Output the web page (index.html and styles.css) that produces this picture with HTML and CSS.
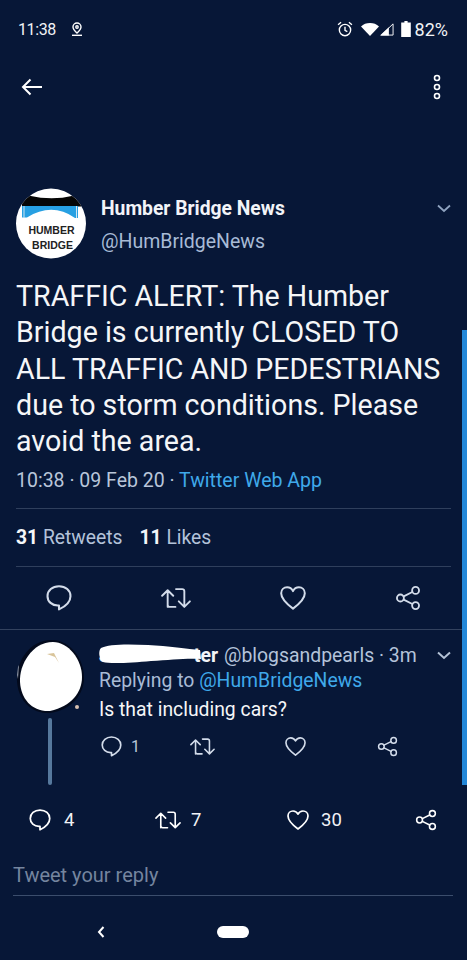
FILE: index.html
```html
<!DOCTYPE html>
<html lang="en">
<head>
    <meta charset="UTF-8">
    <meta name="viewport" content="width=device-width, initial-scale=1.0">
    <title>Humber Bridge News on Twitter</title>
    <link rel="stylesheet" href="styles.css">
</head>
<body>
    <div class="status-bar">
        <div class="status-left">
            <span class="clock">11:38</span>
            <svg class="icon" width="12" height="14" viewBox="0 0 12 14" fill="none" stroke="#fff" stroke-width="1.4"><path d="M6 1a4 4 0 0 0-4 4c0 2.4 2.4 4.400 4 6 1.600-1.600 4-3.600 4-6a4 4 0 0 0-4-4z"/><circle cx="6" cy="5" r="1.200"/><path d="M1 13.300h10"/></svg>
        </div>
        <div class="status-right">
            <svg width="16" height="16" viewBox="0 0 15 15" fill="none" stroke="#fff" stroke-width="1.300"><circle cx="7.500" cy="8.500" r="5.300"/><path d="M7.500 5.500v3.300l2.200 1.200M1 3.500l2.800-2.300M14 3.500l-2.800-2.300"/></svg>
            <svg class="wifi" width="18" height="14" viewBox="0 0 18 14"><path d="M0 4.500C2.400 2 5.500 1 9 1s6.600 1 9 3.500L9 14z" fill="#fff"/></svg>
            <svg class="signal" width="14" height="14" viewBox="0 0 15 14"><path d="M9.500 5v9H0z" fill="#fff"/><path d="M14 1.500V13.500H1.500z" fill="none" stroke="#fff"/></svg>
            <svg class="battery" width="10" height="16" viewBox="0 0 9 15"><path d="M3 0h3v1.500h3V15H0V1.500h3z" fill="#fff"/></svg>
            <span class="percent">82%</span>
        </div>
    </div>

    <div class="toolbar">
        <svg width="22" height="18" viewBox="0 0 22 18" fill="none" stroke="#fff" stroke-width="2"><path d="M21 9H2M9.500 1.500 2 9l7.500 7.500"/></svg>
        <svg width="10" height="26" viewBox="0 0 10 26" fill="none" stroke="#fff" stroke-width="1.600"><circle cx="5" cy="4" r="2.500"/><circle cx="5" cy="13" r="2.500"/><circle cx="5" cy="22" r="2.500"/></svg>
    </div>

    <div class="tweet">
        <div class="tweet-head">
            <svg class="avatar" width="70" height="71" viewBox="0 0 70 71">
                <defs><clipPath id="logoClip"><circle cx="35" cy="35.500" r="35"/></clipPath></defs>
                <g clip-path="url(#logoClip)">
                    <rect width="70" height="71" fill="#fff"/>
                    <path d="M6 13.300 13.500 7.700Q36 13 57 7.700L65 15v3.500H6z" fill="#050505"/>
                    <path d="M6 18H62V30H59Q36 14 11 29.500H6z" fill="#27a0e2"/>
                    <path d="M8 18v12M60.500 18v12" stroke="#cfe6f4" stroke-width="1"/>
                </g>
                <text x="35.500" y="46" class="logo-text" text-anchor="middle">HUMBER</text>
                <text x="36.500" y="61" class="logo-text" text-anchor="middle">BRIDGE</text>
            </svg>
            <div class="tweet-names">
                <div class="name">Humber Bridge News</div>
                <div class="handle">@HumBridgeNews</div>
            </div>
            <svg class="chevron" width="14" height="9" viewBox="0 0 14 9" fill="none" stroke="#8fa3c0" stroke-width="1.800"><path d="M1 1.500 7 7l6-5.500"/></svg>
        </div>
        <p class="tweet-text">TRAFFIC ALERT: The Humber Bridge is currently CLOSED TO ALL TRAFFIC AND PEDESTRIANS due to storm conditions. Please avoid the area.</p>
        <div class="meta">10:38 · 09 Feb 20 · <span class="link">Twitter Web App</span></div>
        <div class="stats">
            <span><b>31</b> Retweets</span>
            <span><b>11</b> Likes</span>
        </div>
        <div class="actions">
            <svg width="26" height="26" viewBox="1.500 2 21 21.500" class="ic"><path d="M12 3C6.500 3 2.500 6.600 2.500 11.200c0 4.500 3.800 7.800 8.500 7.800h1v3.200c4.500-2.200 9.500-6 9.500-11C21.500 6.600 17.500 3 12 3z"/></svg>
            <svg width="30" height="26" viewBox="1 2 27 20" class="ic"><path d="M7 20V5.500M2 10l5-5 5 5M14.500 4H20a2 2 0 0 1 2 2v13.500M17 15l5 5 5-5M14 20H9a2 2 0 0 1-2-2"/></svg>
            <svg width="26" height="26" viewBox="1 2 22 21" class="ic"><path d="M12 21.500C6 17 2 13 2 8.500 2 5.500 4.300 3.500 7 3.500c2.200 0 4 1.200 5 3.200 1-2 2.800-3.200 5-3.200 2.700 0 5 2 5 5 0 4.500-4 8.500-10 13z"/></svg>
            <svg width="26" height="26" viewBox="0 0 24 24" class="ic"><circle cx="5" cy="12" r="3.200"/><circle cx="19" cy="5" r="3.200"/><circle cx="19" cy="19" r="3.200"/><path d="M8 10.500 16 6.500M8 13.500l8 4"/></svg>
        </div>
    </div>

    <div class="reply">
        <div class="reply-side">
            <svg class="reply-avatar" width="70" height="76" viewBox="0 0 70 76">
                <path d="M2 44C1 24 15 2 38 3c17 1 31 18 31 38 0 16-12 32-34 35C15 77 3 62 2 44z" fill="#030a1c"/>
                <path d="M5 45C4 28 17 5 38 5c15 0 29 17 29 35 0 15-10 29-32 34C17 75 6 62 5 45z" fill="#fff"/>
                <path d="M32 17l7-1 5 10-4-6z" fill="#d9c49a"/>
                <path d="M3 30l1-2-1 14-1-4z" fill="#8b93a3"/>
                <circle cx="62" cy="70" r="2" fill="#d8c1b0"/>
            </svg>
            <div class="thread-line"></div>
        </div>
        <div class="reply-body">
            <div class="reply-head">
                <span class="name-small">J<span class="blanked"></span>ter</span>
                <span class="handle-small">@blogsandpearls · 3m</span>
                <svg class="reply-chevron" width="14" height="9" viewBox="0 0 14 9" fill="none" stroke="#b4c2d6" stroke-width="2"><path d="M1 1.500 7 7l6-5.500"/></svg>
                <svg class="redaction" width="104" height="20" viewBox="0 0 104 20"><path d="M3 4C10 0 30 0 50 1s40 4 52 5l1 9c-15-1-30 1-50 2-20 2-42 3-48 1C1 15 0 7 3 4z" fill="#fff"/></svg>
            </div>
            <div class="replying">Replying to <span class="link">@HumBridgeNews</span></div>
            <div class="reply-text">Is that including cars?</div>
            <div class="reply-actions">
                <div class="count-item w-reply">
                    <svg width="21" height="21" viewBox="1.500 2 21 21.500" class="ic"><path d="M12 3C6.500 3 2.500 6.600 2.500 11.200c0 4.500 3.800 7.800 8.500 7.800h1v3.200c4.500-2.200 9.500-6 9.500-11C21.500 6.600 17.500 3 12 3z"/></svg>
                    <span>1</span>
                </div>
                <svg class="w-rt ic" width="25" height="21" viewBox="1 2 27 20"><path d="M7 20V5.500M2 10l5-5 5 5M14.500 4H20a2 2 0 0 1 2 2v13.500M17 15l5 5 5-5M14 20H9a2 2 0 0 1-2-2"/></svg>
                <svg class="w-like ic" width="21" height="21" viewBox="1 2 22 21"><path d="M12 21.500C6 17 2 13 2 8.500 2 5.500 4.300 3.500 7 3.500c2.200 0 4 1.200 5 3.200 1-2 2.800-3.200 5-3.200 2.700 0 5 2 5 5 0 4.500-4 8.500-10 13z"/></svg>
                <svg class="ic" width="21" height="21" viewBox="0 0 24 24"><circle cx="5" cy="12" r="3.200"/><circle cx="19" cy="5" r="3.200"/><circle cx="19" cy="19" r="3.200"/><path d="M8 10.500 16 6.500M8 13.500l8 4"/></svg>
            </div>
        </div>
    </div>

    <div class="count-bar">
        <div class="count-item c-reply">
            <svg width="22" height="22" viewBox="1.500 2 21 21.500" class="ic white"><path d="M12 3C6.500 3 2.500 6.600 2.500 11.200c0 4.500 3.800 7.800 8.500 7.800h1v3.200c4.500-2.200 9.500-6 9.500-11C21.500 6.600 17.500 3 12 3z"/></svg>
            <span>4</span>
        </div>
        <div class="count-item c-rt">
            <svg width="26" height="22" viewBox="1 2 27 20" class="ic white"><path d="M7 20V5.500M2 10l5-5 5 5M14.500 4H20a2 2 0 0 1 2 2v13.500M17 15l5 5 5-5M14 20H9a2 2 0 0 1-2-2"/></svg>
            <span>7</span>
        </div>
        <div class="count-item c-like">
            <svg width="22" height="22" viewBox="1 2 22 21" class="ic white"><path d="M12 21.500C6 17 2 13 2 8.500 2 5.500 4.300 3.500 7 3.500c2.200 0 4 1.200 5 3.200 1-2 2.800-3.200 5-3.200 2.700 0 5 2 5 5 0 4.500-4 8.500-10 13z"/></svg>
            <span>30</span>
        </div>
        <svg width="22" height="22" viewBox="0 0 24 24" class="ic white"><circle cx="5" cy="12" r="3.200"/><circle cx="19" cy="5" r="3.200"/><circle cx="19" cy="19" r="3.200"/><path d="M8 10.500 16 6.500M8 13.500l8 4"/></svg>
    </div>

    <div class="compose">Tweet your reply</div>

    <div class="nav-bar">
        <svg width="8" height="12" viewBox="0 0 8 12" fill="none" stroke="#fff" stroke-width="2"><path d="M6.500 1 2 6l4.500 5"/></svg>
        <div class="home-pill"></div>
    </div>

    <div class="scrollbar"></div>
</body>
</html>
```

FILE: styles.css
```css
* {
    box-sizing: border-box;
}
html, body {
    height: 100%;
}
body {
    position: relative;
    width: 467px;
    height: 960px;
    margin: 0;
    overflow: hidden;
    background-color: #071737;
    color: #fff;
    font-family: Roboto, sans-serif;
}
svg {
    display: block;
    flex: none;
}
.ic {
    fill: none;
    stroke: #d3dcea;
    stroke-width: 1.700;
    stroke-linejoin: round;
    stroke-linecap: round;
}
.ic.white {
    stroke: #fff;
}
.link {
    color: #3fa9ea;
}

/* status bar */
.status-bar {
    display: flex;
    justify-content: space-between;
    align-items: center;
    height: 58px;
    padding: 0 19px 0 18px;
    font-size: 16px;
    color: #f1f3f6;
}
.status-left {
    display: flex;
    align-items: center;
    gap: 15px;
}
.clock {
    letter-spacing: -0.4px;
}
.status-right {
    display: flex;
    align-items: center;
}
.wifi {
    margin-left: 8px;
}
.signal {
    margin-left: 1px;
}
.battery {
    margin: 0 4px 0 7px;
}
.percent {
    font-size: 18px;
}

.toolbar {
    display: flex;
    justify-content: space-between;
    align-items: center;
    height: 58px;
    padding: 0 25px 0 21px;
}

/* main tweet */
.tweet {
    padding: 72px 16px 0;
}
.tweet-head {
    display: flex;
    align-items: flex-start;
}
.avatar {
    margin-right: 15px;
}
.logo-text {
    font-family: "Liberation Sans", sans-serif;
    font-size: 10.500px;
    font-weight: 700;
    fill: #222;
}
.tweet-names {
    flex: 1;
}
.name {
    height: 33px;
    padding-top: 10px;
    font-size: 19.300px;
    line-height: 22px;
    font-weight: 700;
    color: #f2f4f8;
}
.handle {
    margin-top: 10px;
    font-size: 19.500px;
    line-height: 22px;
    color: #a8bbd6;
}
.chevron {
    margin-top: 16px;
}
.tweet-text {
    margin: 19px 0 0;
    font-size: 28.600px;
    line-height: 36.300px;
    color: #f5f6f8;
}
.meta {
    margin-top: 10px;
    height: 40px;
    padding-top: 1px;
    font-size: 19.500px;
    line-height: 22px;
    color: #b9c6da;
    border-bottom: 1px solid #2f3f5c;
}
.stats {
    display: flex;
    gap: 17px;
    height: 58px;
    padding-top: 18px;
    font-size: 19.300px;
    line-height: 22px;
    color: #b4c3da;
    border-bottom: 1px solid #2f3f5c;
}
.stats b {
    color: #f4f6f9;
}
.actions {
    display: flex;
    justify-content: space-between;
    align-items: center;
    height: 62px;
    padding: 0 30px;
}

/* reply */
.reply {
    display: flex;
    height: 164px;
    border-top: 1px solid #33425e;
}
.reply-side {
    width: 98px;
    flex: none;
    display: flex;
    flex-direction: column;
    padding: 7px 0 0 15px;
}
.reply-avatar {
    margin-bottom: 5px;
}
.thread-line {
    width: 4px;
    height: 67px;
    margin-left: 33px;
    border-radius: 2px;
    background-color: #56799d;
}
.reply-body {
    flex: 1;
    min-width: 0;
    padding: 12px 16px 0 1px;
}
.reply-head {
    position: relative;
    display: flex;
    align-items: center;
    gap: 6px;
    height: 27px;
    font-size: 19.400px;
}
.name-small {
    font-weight: 700;
    color: #f2f4f8;
    white-space: nowrap;
}
.blanked {
    display: inline-block;
    width: 84px;
}
.handle-small {
    white-space: nowrap;
    color: #b4c3da;
}
.reply-chevron {
    margin-left: auto;
}
.redaction {
    position: absolute;
    left: -1px;
    top: 2px;
}
.replying {
    margin-top: -1px;
    font-size: 19.400px;
    line-height: 26px;
    color: #a8bbd6;
}
.reply-text {
    margin-top: 3px;
    font-size: 19.350px;
    line-height: 26px;
    color: #f5f6f8;
}
.reply-actions {
    display: flex;
    align-items: center;
    margin-top: 13px;
    padding-left: 2px;
    font-size: 16px;
    color: #b9c6da;
}
.count-item {
    display: flex;
    align-items: center;
}
.w-reply {
    width: 89px;
    gap: 9px;
}
.w-rt {
    margin-right: 70px;
}
.w-like {
    margin-right: 71px;
}

/* bottom counts */
.count-bar {
    display: flex;
    align-items: center;
    justify-content: space-between;
    height: 54px;
    padding: 0 30px 0 29px;
    font-size: 18.500px;
    color: #f0f2f6;
}
.c-reply {
    gap: 13px;
    width: 126px;
}
.c-rt {
    gap: 10px;
    width: 132px;
}
.c-like {
    gap: 12px;
    width: 128px;
}
.compose {
    height: 49px;
    margin: 0 14px 0 13px;
    padding-top: 15px;
    font-size: 20px;
    line-height: 26px;
    color: #75859f;
    border-bottom: 1px solid #3b4d6c;
}
.nav-bar {
    display: flex;
    align-items: center;
    height: 64px;
    padding-left: 97px;
    padding-top: 8px;
}
.home-pill {
    width: 32px;
    height: 12px;
    margin-left: 112px;
    border-radius: 6px;
    background-color: #fff;
}
.scrollbar {
    position: absolute;
    top: 330px;
    right: 0;
    width: 5px;
    height: 455px;
    background-color: #2387d8;
}
```
